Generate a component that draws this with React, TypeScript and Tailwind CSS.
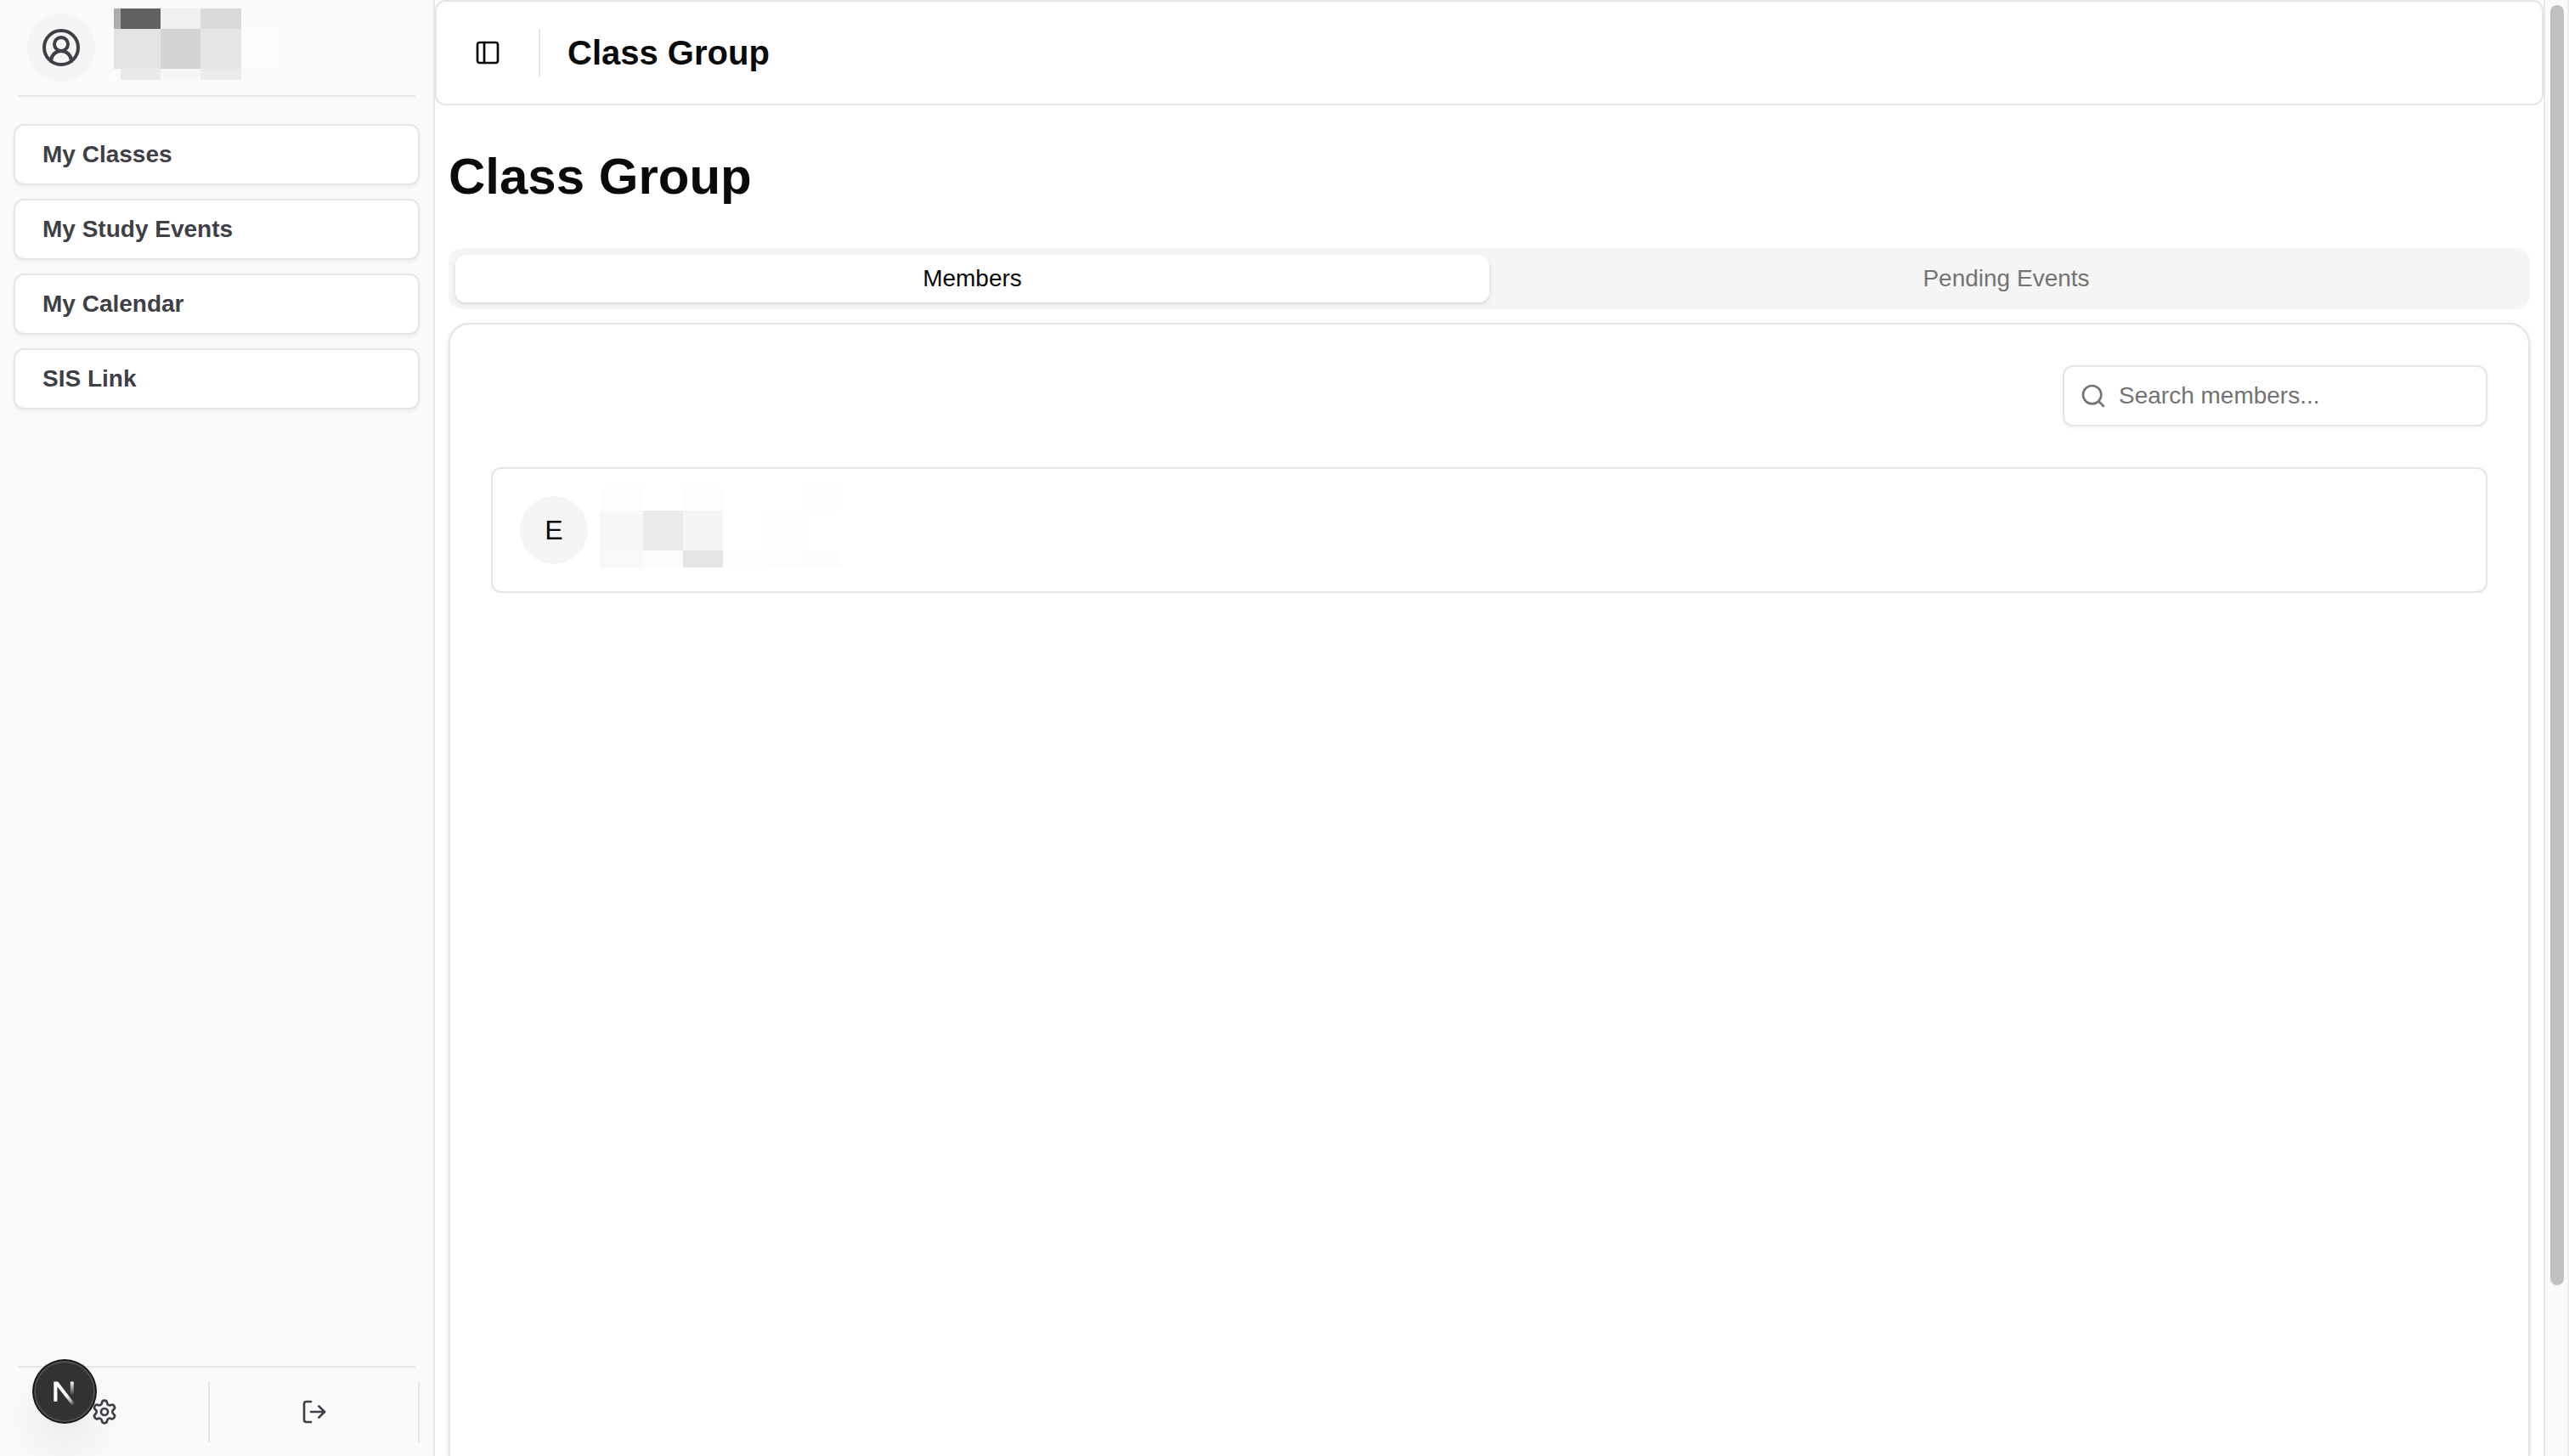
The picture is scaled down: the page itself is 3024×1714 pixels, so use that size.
import { CircleUserRound, LogOut, PanelLeft, Search, Settings } from "lucide-react";

const navItems = ["My Classes", "My Study Events", "My Calendar", "SIS Link"];

const profileMosaic = [
  "bg-[#adadad]", "bg-[#616161]", "bg-[#f0f0f0]", "bg-[#d9dbda]", "bg-transparent",
  "bg-[#e3e3e3]", "bg-[#e4e4e4]", "bg-[#d4d4d4]", "bg-[#e6e6e6]", "bg-[#fbfbfb]",
  "bg-[#fbfbfb]", "bg-[#e9e9e9]", "bg-[#f6f6f6]", "bg-[#ececec]", "bg-[#f9f9f9]",
];

const memberMosaic = [
  "bg-white", "bg-[#fdfdfd]", "bg-white", "bg-[#fdfdfd]", "bg-white", "bg-white", "bg-[#fdfdfd]",
  "bg-[#f6f6f6]", "bg-[#f7f7f7]", "bg-[#ebebeb]", "bg-[#f5f5f5]", "bg-white", "bg-[#fefefe]", "bg-white",
  "bg-[#f8f8f8]", "bg-[#f8f8f8]", "bg-[#fcfcfc]", "bg-[#e5e5e5]", "bg-[#fefefe]", "bg-[#fdfdfd]", "bg-[#fcfcfc]",
];

function NextBadge() {
  return (
    <button
      type="button"
      aria-label="Open Next.js Dev Tools"
      className="fixed bottom-10 left-10 size-[72px] rounded-full bg-[#323232] shadow-[0_0_0_2px_#171717,inset_0_0_0_2px_rgba(255,255,255,0.14),0_32px_64px_-16px_rgba(0,0,0,0.24)]"
    >
      <svg viewBox="0 0 72 72" className="size-full" fill="none" aria-hidden="true">
        <defs>
          <linearGradient id="diag" x1="38" y1="40" x2="47" y2="52" gradientUnits="userSpaceOnUse">
            <stop stopColor="#fff" />
            <stop offset="0.6" stopColor="#fff" stopOpacity="0.6" />
            <stop offset="1" stopColor="#fff" stopOpacity="0" />
          </linearGradient>
          <linearGradient id="stem" x1="45" y1="24" x2="45" y2="41" gradientUnits="userSpaceOnUse">
            <stop stopColor="#fff" />
            <stop offset="1" stopColor="#fff" stopOpacity="0" />
          </linearGradient>
        </defs>
        <path d="M23.3 24.5h4.9L48 50.2l-3.2 2.4L27.4 30.2v17.5h-4.1z" fill="url(#diag)" />
        <path d="M42.8 24.5h4v17h-4z" fill="url(#stem)" />
      </svg>
    </button>
  );
}

function Sidebar() {
  return (
    <aside className="flex w-[512px] shrink-0 flex-col border-r-2 border-[#e5e5e5] bg-[#fafafa] text-[#3f3f46]">
      <div className="flex items-center gap-[22px] px-8 py-2.5">
        <div className="flex size-20 items-center justify-center rounded-full bg-[#f5f5f5]">
          <CircleUserRound size={48} />
        </div>
        <div className="grid h-[92px] grid-cols-[8px_47px_47px_48px_40px] grid-rows-[24px_47px_13px]">
          {profileMosaic.map((c, i) => (
            <span key={i} className={c} />
          ))}
        </div>
      </div>
      <hr className="mx-[21px] border-t-2 border-[#e5e5e5]" />
      <nav className="flex grow flex-col gap-4 px-4 pt-8">
        {navItems.map((item) => (
          <a
            key={item}
            href="#"
            className="flex h-[72px] items-center rounded-xl border-2 border-[#e5e5e5] bg-white px-8 text-[28px] leading-10 font-bold shadow-[0_2px_4px_rgba(0,0,0,0.05)]"
          >
            {item}
          </a>
        ))}
      </nav>
      <hr className="mx-[21px] border-t-2 border-[#e5e5e5]" />
      <div className="grid grid-cols-2 py-4 pr-4">
        <button type="button" aria-label="Settings" className="flex h-[72px] items-center justify-center border-r-2 border-[#e5e5e5]">
          <Settings size={32} />
        </button>
        <button type="button" aria-label="Log out" className="flex h-[72px] items-center justify-center border-r-2 border-[#e5e5e5]">
          <LogOut size={32} />
        </button>
      </div>
    </aside>
  );
}

export default function App() {
  return (
    <div className="flex h-screen overflow-hidden bg-white font-['Liberation_Sans',Arial,sans-serif] text-[#0a0a0a]">
      <Sidebar />
      <div className="flex min-w-0 grow flex-col">
        <header className="flex h-[124px] shrink-0 items-center rounded-xl border-2 border-[#e5e5e5] px-8">
          <button type="button" aria-label="Toggle sidebar" className="flex size-14 items-center justify-center">
            <PanelLeft size={32} />
          </button>
          <div className="mx-8 h-14 w-0.5 bg-[#e5e5e5]" />
          <span className="text-[40px] leading-14 font-bold">Class Group</span>
        </header>
        <main className="flex min-h-0 grow flex-col px-4 pt-12">
          <h1 className="text-[60px] leading-[72px] font-bold">Class Group</h1>
          <div role="tablist" className="mt-12 grid h-[72px] shrink-0 grid-cols-2 rounded-2xl bg-[#f5f5f5] p-2 text-[28px] leading-10">
            <button type="button" role="tab" aria-selected="true" className="rounded-xl bg-white shadow-[0_2px_6px_rgba(0,0,0,0.1),0_2px_4px_-2px_rgba(0,0,0,0.1)]">
              Members
            </button>
            <button type="button" role="tab" aria-selected="false" className="text-[#737373]">
              Pending Events
            </button>
          </div>
          <section className="mt-4 grow rounded-t-3xl border-2 border-b-0 border-[#e5e5e5] p-12 shadow-[0_2px_6px_rgba(0,0,0,0.1),0_2px_4px_-2px_rgba(0,0,0,0.1)]">
            <div className="flex justify-end">
              <label className="flex h-[72px] w-[500px] items-center gap-3.5 rounded-xl border-2 border-[#e5e5e5] px-[18px] text-[#737373] shadow-[0_2px_4px_rgba(0,0,0,0.05)]">
                <Search size={32} className="shrink-0" aria-hidden="true" />
                <input
                  type="text"
                  aria-label="Search members"
                  placeholder="Search members..."
                  className="min-w-0 grow text-[28px] leading-10 outline-none placeholder:text-[#737373]"
                />
              </label>
            </div>
            <ul className="mt-12">
              <li className="flex items-center gap-3.5 rounded-xl border-2 border-[#e5e5e5] px-8 py-[22px]">
                <div className="flex size-20 items-center justify-center rounded-full bg-[#f5f5f5] text-[32px] leading-12">E</div>
                <div className="grid h-[100px] grid-cols-[3px_48px_47px_47px_47px_48px_44px] grid-rows-[27px_47px_20px]">
                  {memberMosaic.map((c, i) => (
                    <span key={i} className={c} />
                  ))}
                </div>
              </li>
            </ul>
          </section>
        </main>
      </div>
      <div className="w-[30px] shrink-0 border-r-2 border-l-2 border-r-[#ededed] border-l-[#e8e8e8] bg-[#fafafa] pt-1.5 pr-1 pl-1.5">
        <div className="h-15/17 rounded-full bg-[#c1c1c1]" />
      </div>
      <NextBadge />
    </div>
  );
}
